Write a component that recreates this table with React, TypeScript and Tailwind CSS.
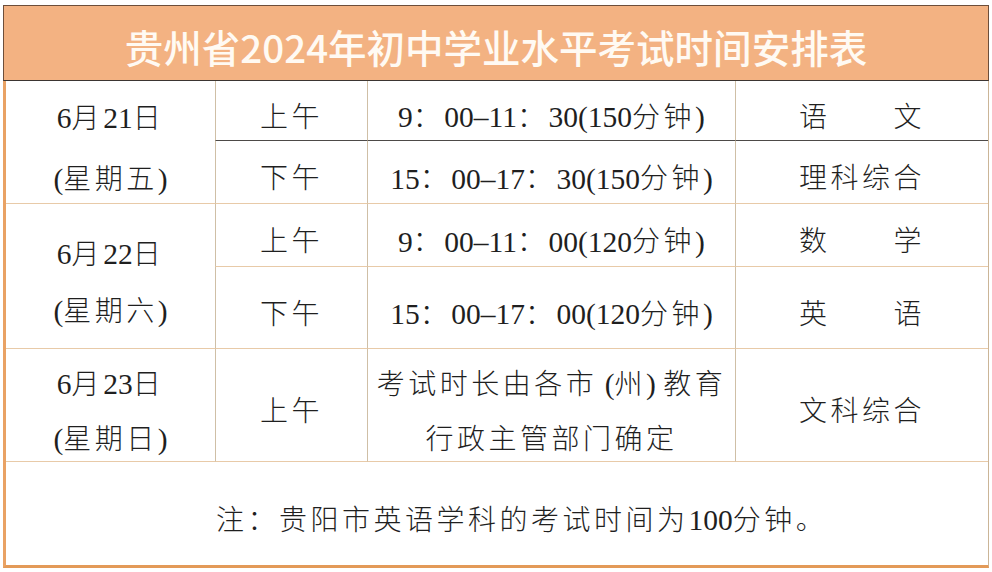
const CJK = /([\u3000-\u303f\u3400-\u9fff\uff00-\uffef]+)/;

function Txt({ s }: { s: string }) {
  return (
    <>
      {s
        .split(CJK)
        .filter(Boolean)
        .map((part, i) =>
          CJK.test(part) ? (
            <span key={i} className="tracking-[3.5px] font-light">
              {part}
            </span>
          ) : (
            <span key={i} className="text-[29.5px]">
              {part}
            </span>
          )
        )}
    </>
  );
}

const cell =
  "flex items-center justify-center pt-[14px] border-b border-[#e8caa8] text-center";
const col = "border-l border-l-[#cfbfa6]";

export default function App() {
  return (
    <div className="w-[992px] h-[572px] bg-white pt-[5px] pl-[3px]">
      <div className="w-[986px]">
        <div className="h-[76px] bg-[#f3b282] border-t border-l border-r border-[#6d4e3a] border-b border-b-[#3b3532] flex items-center justify-center pt-[6px]">
          <h1 className="font-['Noto_Sans_CJK_SC',sans-serif] font-medium text-[38.5px] leading-none text-[#fffaf3]">
            贵州省2024年初中学业水平考试时间安排表
          </h1>
        </div>

        <div className="grid grid-cols-[209px_152px_368px_1fr] grid-rows-[60px_63px_63px_82px_113px_103px] border-l-[3px] border-l-[#e9a264] border-b-[3px] border-b-[#e39a58] border-r border-r-[#cbb597] font-['Liberation_Serif','Noto_Sans_CJK_SC',serif] text-[28px] text-[#1f1f1f]">
          {/* 6月21日 */}
          <div className={`${cell} row-span-2 flex-col leading-[61px]`}>
            <div><Txt s="6月21日" /></div>
            <div><Txt s="(星期五)" /></div>
          </div>
          <div className={`${cell} ${col} border-b-[#4d4a48]`}><Txt s="上午" /></div>
          <div className={`${cell} ${col} border-b-[#4d4a48]`}><Txt s="9：00–11：30(150分钟)" /></div>
          <div className={`${cell} ${col} border-b-[#4d4a48]`}><Txt s="语　　文" /></div>
          <div className={`${cell} ${col}`}><Txt s="下午" /></div>
          <div className={`${cell} ${col}`}><Txt s="15：00–17：30(150分钟)" /></div>
          <div className={`${cell} ${col}`}><Txt s="理科综合" /></div>

          {/* 6月22日 */}
          <div className={`${cell} row-span-2 flex-col leading-[56px]`}>
            <div><Txt s="6月22日" /></div>
            <div><Txt s="(星期六)" /></div>
          </div>
          <div className={`${cell} ${col}`}><Txt s="上午" /></div>
          <div className={`${cell} ${col}`}><Txt s="9：00–11：00(120分钟)" /></div>
          <div className={`${cell} ${col}`}><Txt s="数　　学" /></div>
          <div className={`${cell} ${col}`}><Txt s="下午" /></div>
          <div className={`${cell} ${col}`}><Txt s="15：00–17：00(120分钟)" /></div>
          <div className={`${cell} ${col}`}><Txt s="英　　语" /></div>

          {/* 6月23日 */}
          <div className={`${cell} flex-col leading-[55px]`}>
            <div><Txt s="6月23日" /></div>
            <div><Txt s="(星期日)" /></div>
          </div>
          <div className={`${cell} ${col}`}><Txt s="上午" /></div>
          <div className={`${cell} ${col} flex-col leading-[55px]`}>
            <div><Txt s="考试时长由各市 (州) 教育" /></div>
            <div><Txt s="行政主管部门确定" /></div>
          </div>
          <div className={`${cell} ${col}`}><Txt s="文科综合" /></div>

          <div className="col-span-4 flex items-center pt-[14px] pl-[210px]">
            <Txt s="注：贵阳市英语学科的考试时间为100分钟。" />
          </div>
        </div>
      </div>
    </div>
  );
}
